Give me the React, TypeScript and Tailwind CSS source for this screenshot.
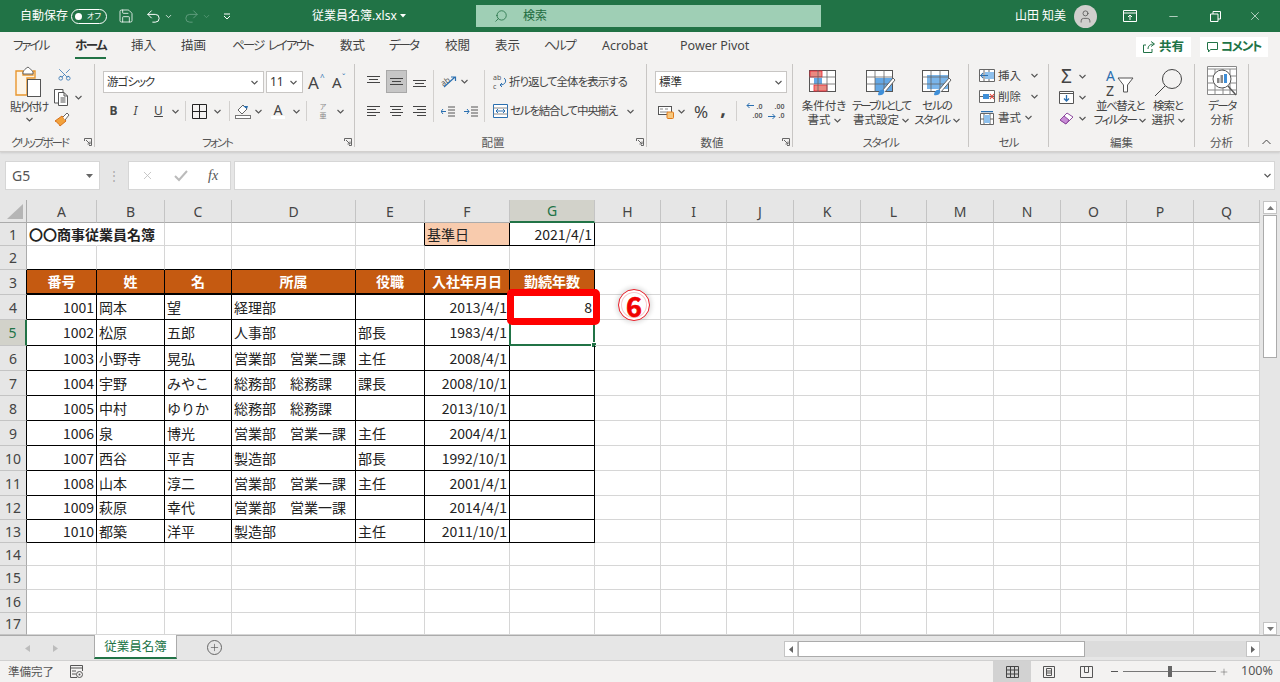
import { ChevronDown, Save, Undo2, Redo2, Search, User, X, Minus, Scissors, Plus } from "lucide-react";
import clsx from "clsx";
import type { ReactNode } from "react";

function Chev({ className }: { className?: string }) {
  return (
    <svg width="7" height="5" viewBox="0 0 7 5" className={clsx("shrink-0", className)}>
      <path d="M.5 1 3.5 4 6.5 1" fill="none" stroke="#555" strokeWidth="1.1" />
    </svg>
  );
}

function Launcher() {
  return (
    <svg width="8" height="8" viewBox="0 0 8 8" className="absolute right-[2px] bottom-[1px]">
      <path d="M.5 3V.5H7.5V7.5H5M2 2 6 6M6 3.5V6H3.5" fill="none" stroke="#666" strokeWidth="1" />
    </svg>
  );
}

function Lines({ ys, xs }: { ys: number[]; xs: [number, number][] }) {
  return (
    <svg width="15" height="15" viewBox="0 0 15 15">
      {ys.map((y, i) => (
        <rect key={y} x={xs[i][0]} y={y} width={xs[i][1]} height="1" fill="#444" />
      ))}
    </svg>
  );
}

const full: [number, number][] = [[1, 13], [3, 9], [1, 13]];

function Cell_({ w, children, active }: { w: string; children?: ReactNode; active?: boolean }) {
  return (
    <div className={clsx("flex items-center justify-center shrink-0 h-full", w, active && "bg-[#c6c6c6] border border-[#a8a8a8]")}>
      {children}
    </div>
  );
}

function VSep() {
  return <div className="w-px h-[20px] bg-[#d2d0ce] shrink-0" />;
}

function Group({ w, label, launcher, tr, children }: { w: string; label: string; launcher?: boolean; tr?: string; children: ReactNode }) {
  return (
    <div className={clsx("relative h-[83px] shrink-0 border-r border-[#c8c6c4] flex flex-col", w)}>
      <div className="h-[73px] shrink-0 flex">{children}</div>
      <div className={clsx("h-[12px] shrink-0 text-center text-[11.5px] leading-[12px] text-[#555] whitespace-nowrap", launcher && "pr-[15px]", tr)}>{label}</div>
      {launcher && <Launcher />}
    </div>
  );
}

function BigBtn({ w, icon, l1, l2, chev, tr1, tr2 }: { w: string; icon: ReactNode; l1: string; l2: string; chev?: boolean; tr1?: string; tr2?: string }) {
  return (
    <div className={clsx("flex flex-col items-center shrink-0", w)}>
      <div className="h-[33px] flex items-end justify-center">{icon}</div>
      <div className={clsx("mt-[2px] text-[11.5px] leading-[14px] text-[#444] text-center whitespace-nowrap", tr1)}>{l1}</div>
      <div className="text-[11.5px] leading-[14px] text-[#444] flex items-center justify-center gap-[3px] whitespace-nowrap">
        <span className={tr2}>{l2}</span>
        {chev && <Chev />}
      </div>
    </div>
  );
}

function TableIcon({ kind }: { kind: "cond" | "table" | "cell" }) {
  return (
    <svg width="30" height="27" viewBox="0 0 30 27">
      <rect x=".5" y=".5" width="26" height="21" fill="#fff" stroke="#555" />
      {kind === "cond" && (
        <>
          <rect x="1" y="1" width="12" height="6" fill="#e98a80" stroke="#e23" strokeWidth=".8" />
          <rect x="5" y="8" width="8" height="6" fill="#64a8e6" />
          <rect x="5" y="15" width="13" height="6" fill="#e98a80" stroke="#e23" strokeWidth=".8" />
        </>
      )}
      {kind === "table" && <rect x="9" y="8" width="17" height="13" fill="#64a8e6" />}
      {kind === "cell" && <rect x="5" y="5" width="21" height="14" fill="#7ab5ea" />}
      <path d="M9 0V22M18 0V22M0 7H27M0 14H27" stroke="#666" strokeWidth=".8" />
      {kind !== "cond" && (
        <>
          <path d="M16 21 27 8l2 2-10 12" fill="#fff" stroke="#666" />
          <path d="M12 25c0-4 3-6 6-5 1 3-1 6-6 5z" fill="#3f8fd8" />
        </>
      )}
    </svg>
  );
}

const tabs = [
  { t: "ファイル", w: "w-[62px]", tr: "tracking-[-2px]" },
  { t: "ホーム", w: "w-[56px]", on: true, tr: "tracking-[-1.5px]" },
  { t: "挿入", w: "w-[50px]" },
  { t: "描画", w: "w-[51px]" },
  { t: "ページ レイアウト", w: "w-[108px]", tr: "tracking-[-1.9px] [word-spacing:3px]" },
  { t: "数式", w: "w-[49px]" },
  { t: "データ", w: "w-[56px]", tr: "tracking-[-2px]" },
  { t: "校閲", w: "w-[50px]" },
  { t: "表示", w: "w-[49px]" },
  { t: "ヘルプ", w: "w-[58px]", tr: "tracking-[-1.5px]" },
  { t: "Acrobat", w: "w-[78px]" },
  { t: "Power Pivot", w: "w-[80px]" },
];

function TitleBar() {
  return (
    <div className="h-8 bg-[#217346] flex items-center text-white text-[12px] shrink-0">
      <span className="ml-[20px] w-[51px] whitespace-nowrap">自動保存</span>
      <div className="w-[36px] h-[15px] rounded-full border border-white flex items-center px-[3px] justify-between">
        <span className="w-[7px] h-[7px] rounded-full bg-white" />
        <span className="text-[8px] leading-none mr-[2px]">オフ</span>
      </div>
      <Save size={16} strokeWidth={1.2} className="ml-[11px]" />
      <Undo2 size={17} strokeWidth={1.4} className="ml-[11px]" />
      <ChevronDown size={9} className="ml-[2px]" />
      <Redo2 size={17} strokeWidth={1.4} className="ml-[10px] text-[#5f9c7c]" />
      <ChevronDown size={9} className="ml-[2px] text-[#5f9c7c]" />
      <svg width="8" height="7" viewBox="0 0 8 7" className="ml-[12px]">
        <path d="M1 1H7M1 3 4 6 7 3" fill="none" stroke="#fff" />
      </svg>
      <span className="ml-[81px] w-[85px] whitespace-nowrap text-[12px]">従業員名簿.xlsx</span>
      <svg width="6" height="4" viewBox="0 0 6 4" className="ml-[3px]">
        <path d="M0 0H6L3 3.5Z" fill="#fff" />
      </svg>
      <div className="ml-[70px] w-[345px] h-[22px] bg-[#9fcfb5] flex items-center text-[#1d6b40]">
        <Search size={14} strokeWidth={1.3} className="ml-[18px] -scale-x-100" />
        <span className="ml-[15px]">検索</span>
      </div>
      <span className="ml-[194px] whitespace-nowrap">山田 知美</span>
      <div className="ml-[8px] w-[23px] h-[23px] rounded-full bg-[#d0cfcd] flex items-center justify-center">
        <User size={15} strokeWidth={1.3} className="text-[#555]" />
      </div>
      <svg width="14" height="12" viewBox="0 0 14 12" className="ml-[26px]">
        <path d="M.5 .5H13.5V11.5H.5ZM.5 3H13.5M7 10V5M5 7 7 5 9 7" fill="none" stroke="#fff" />
      </svg>
      <Minus size={13} strokeWidth={1.2} className="ml-[30px]" />
      <svg width="11" height="11" viewBox="0 0 11 11" className="ml-[30px]">
        <path d="M.5 3H8V10.5H.5ZM3 3V.5H10.5V8H8" fill="none" stroke="#fff" />
      </svg>
      <X size={14} strokeWidth={1.1} className="ml-[27px]" />
    </div>
  );
}

function TabRow() {
  return (
    <div className="h-7 flex items-center pl-[13px] text-[12.5px] text-[#444] shrink-0">
      {tabs.map((t) => (
        <div key={t.t} className={clsx("shrink-0 whitespace-nowrap", t.w, t.tr)}>
          <span className={clsx("relative inline-block", t.on && "font-bold text-[#333]")}>
            {t.t}
            {t.on && <span className="absolute -bottom-[4px] left-0 right-0 h-[2px] bg-[#217346]" />}
          </span>
        </div>
      ))}
      <div className="ml-auto flex gap-[9px] mr-[12px] mt-[2px]">
        <div className="w-[55px] h-[20px] bg-white flex items-center justify-center gap-[4px] font-bold text-[#217346] text-[12.5px]">
          <svg width="12" height="12" viewBox="0 0 12 12">
            <path d="M8 .5 11.5 3 8 5.5M11 3C7 3 5 5 5 8M3 4H.5V11.5H9V8" fill="none" stroke="#217346" />
          </svg>
          共有
        </div>
        <div className="w-[68px] h-[20px] bg-white flex items-center justify-center gap-[3px] font-bold text-[#217346] text-[12.5px] tracking-[-1.2px]">
          <svg width="11" height="11" viewBox="0 0 11 11">
            <path d="M.5 .5H10.5V7.5H3.5L1.5 10V7.5H.5Z" fill="none" stroke="#217346" />
          </svg>
          コメント
        </div>
      </div>
    </div>
  );
}

function Clipboard() {
  return (
    <div className="flex">
      <div className="w-[48px] ml-[5px] flex flex-col items-center">
        <svg width="28" height="32" viewBox="0 0 28 32" className="mt-[2px]">
          <path d="M1 5H8V9H18V5H20V12H12V29H1Z" fill="#fdf4e6" stroke="#e8962e" strokeWidth="1.4" />
          <path d="M8 6C9 4 10 3 13 1 15 3 17 4 18 6V8H8Z" fill="#fff" stroke="#666" />
          <rect x="12.5" y="13.5" width="13" height="17" fill="#fff" stroke="#555" />
        </svg>
        <span className="mt-[2px] text-[11.5px] leading-[14px] text-[#444] whitespace-nowrap tracking-[-1.5px]">貼り付け</span>
        <Chev className="mt-[3px]" />
      </div>
      <div className="ml-[1px] flex flex-col items-start pt-[3px] gap-[7px]">
        <Scissors size={15} strokeWidth={1.2} className="text-[#2a6fb0] -rotate-90 ml-[3px]" />
        <div className="flex items-center gap-[5px]">
          <svg width="16" height="17" viewBox="0 0 16 17">
            <path d="M4 14H.5V.5H9V3M4.5 3.5H10L13.5 7V16.5H4.5ZM10 3.5V7H13.5M6.5 9H11.5M6.5 11H11.5M6.5 13H11.5" fill="#fff" stroke="#555" />
          </svg>
          <Chev />
        </div>
        <svg width="16" height="15" viewBox="0 0 16 15" className="-mt-[1px]">
          <path d="M1 9 8 4 12 9 6 14C5 12 3 10 1 9Z" fill="#f2a23c" stroke="#d8701a" />
          <path d="M9 5 13 1 15 3 11 8" fill="#fff" stroke="#666" />
        </svg>
      </div>
    </div>
  );
}

function FontGroup() {
  return (
    <div className="pl-[8px] pt-[7px] flex flex-col">
      <div className="h-[22px] flex items-center">
        <div className="w-[161px] h-[22px] bg-white border border-[#c8c6c4] flex items-center justify-between pl-[3px] pr-[5px] text-[11.5px] text-[#333]">
          <span className="tracking-[-1px]">游ゴシック</span>
          <Chev />
        </div>
        <div className="ml-[2px] w-[37px] h-[22px] bg-white border border-[#c8c6c4] flex items-center justify-between pl-[3px] pr-[5px] text-[12px] text-[#333]">
          11
          <Chev />
        </div>
        <div className="ml-[5px] w-[20px] text-[17px] leading-none text-[#444] relative">
          A<span className="absolute -top-[1px] left-[12px] text-[8px] text-[#2a6fb0]">^</span>
        </div>
        <div className="ml-[4px] w-[15px] text-[15px] leading-none text-[#444] relative">
          A<span className="absolute -top-[1px] left-[10px] text-[8px] text-[#2a6fb0]">ˇ</span>
        </div>
      </div>
      <div className="h-[22px] mt-[7px] flex items-center text-[#444]">
        <Cell_ w="w-[21px]"><b className="text-[12px]">B</b></Cell_>
        <Cell_ w="w-[23px]"><i className="text-[12px]">I</i></Cell_>
        <Cell_ w="w-[23px]"><span className="text-[12px] underline">U</span></Cell_>
        <Cell_ w="w-[10px]"><Chev /></Cell_>
        <Cell_ w="w-[10px]"><VSep /></Cell_>
        <Cell_ w="w-[18px]">
          <svg width="15" height="15" viewBox="0 0 15 15">
            <path d="M.5 .5H14.5V14.5H.5ZM7.5 0V15M0 7.5H15" fill="none" stroke="#222" />
          </svg>
        </Cell_>
        <Cell_ w="w-[18px]"><Chev /></Cell_>
        <Cell_ w="w-[6px]"><VSep /></Cell_>
        <Cell_ w="w-[22px]">
          <svg width="16" height="15" viewBox="0 0 16 15">
            <path d="M3 6 8 1 12 5 7 10Z" fill="#fff" stroke="#666" />
            <path d="M8 2 13 2 12 5Z" fill="#2a6fb0" />
            <rect x=".5" y="11.5" width="15" height="3" fill="#fff" stroke="#777" />
          </svg>
        </Cell_>
        <Cell_ w="w-[9px]"><Chev /></Cell_>
        <Cell_ w="w-[30px]">
          <div className="flex flex-col items-center text-[14px] leading-[13px]">
            A<span className="w-[14px] h-[3px] bg-white" />
          </div>
        </Cell_>
        <Cell_ w="w-[7px]"><Chev /></Cell_>
        <Cell_ w="w-[12px]"><VSep /></Cell_>
        <Cell_ w="w-[22px]">
          <span className="text-[7px] leading-[9px] text-center text-[#888]">ア<br />亜</span>
        </Cell_>
        <Cell_ w="w-[12px]"><Chev /></Cell_>
      </div>
    </div>
  );
}

function AlignGroup() {
  return (
    <div className="pl-[6px] pt-[6px] flex">
      <div className="w-[72px] flex flex-col gap-[7px]">
        <div className="flex h-[23px] items-center">
          <Cell_ w="w-[25px]"><Lines ys={[2, 5, 8]} xs={full} /></Cell_>
          <Cell_ w="w-[21px]" active><Lines ys={[4, 7, 10]} xs={full} /></Cell_>
          <Cell_ w="w-[24px]"><Lines ys={[6, 9, 12]} xs={full} /></Cell_>
        </div>
        <div className="flex h-[22px] items-center">
          <Cell_ w="w-[25px]"><Lines ys={[2, 5, 8, 11]} xs={[[1, 13], [1, 9], [1, 13], [1, 9]]} /></Cell_>
          <Cell_ w="w-[21px]"><Lines ys={[2, 5, 8, 11]} xs={[[1, 13], [3, 9], [1, 13], [3, 9]]} /></Cell_>
          <Cell_ w="w-[24px]"><Lines ys={[2, 5, 8, 11]} xs={[[1, 13], [5, 9], [1, 13], [5, 9]]} /></Cell_>
        </div>
      </div>
      <div className="w-px h-[52px] bg-[#d2d0ce]" />
      <div className="w-[50px] flex flex-col gap-[7px]">
        <div className="flex h-[23px] items-center pl-[6px] gap-[4px]">
          <svg width="17" height="15" viewBox="0 0 17 15" className="overflow-visible">
            <text x="1" y="10" fontSize="8" fill="#555" transform="rotate(-35 6 8)">ab</text>
            <path d="M4 13 15 3M11 3H15.500V7" fill="none" stroke="#2a6fb0" strokeWidth="1.2" />
          </svg>
          <Chev />
        </div>
        <div className="flex h-[22px] items-center pl-[7px] gap-[8px]">
          <svg width="15" height="11" viewBox="0 0 15 11">
            <path d="M7 1H14M7 4H14M7 7H14M7 10H14" stroke="#555" />
            <path d="M5 5.500H0M2 3 0 5.500 2 8" fill="none" stroke="#2a6fb0" />
          </svg>
          <svg width="15" height="11" viewBox="0 0 15 11">
            <path d="M7 1H14M7 4H14M7 7H14M7 10H14" stroke="#555" />
            <path d="M0 5.500H5M3 3 5 5.500 3 8" fill="none" stroke="#2a6fb0" />
          </svg>
        </div>
      </div>
      <div className="w-px h-[52px] bg-[#d2d0ce]" />
      <div className="pl-[8px] flex flex-col gap-[7px] text-[11.5px] text-[#444] whitespace-nowrap">
        <div className="flex h-[23px] items-center gap-[2px]">
          <svg width="14" height="16" viewBox="0 0 14 16" className="overflow-visible">
            <text x="0" y="6" fontSize="7" fill="#555">ab</text>
            <text x="0" y="15" fontSize="7" fill="#555">c</text>
            <path d="M11 4C14 6 13 11 7 11M9 9 7 11 9 13" fill="none" stroke="#2a6fb0" />
          </svg>
          <span className="tracking-[-1px]">折り返して全体を表示する</span>
        </div>
        <div className="flex h-[22px] items-center gap-[2px]">
          <svg width="15" height="14" viewBox="0 0 15 14">
            <path d="M.5 .5H14.500V13.500H.5Z" fill="#fff" stroke="#2a6fb0" />
            <path d="M.5 4H14.500M.5 10H14.500" stroke="#888" />
            <path d="M3 7H12M5 5 3 7 5 9M10 5 12 7 10 9" fill="none" stroke="#2a6fb0" />
          </svg>
          <span className="tracking-[-1.2px]">セルを結合して中央揃え</span>
          <Chev className="ml-[8px]" />
        </div>
      </div>
    </div>
  );
}

function NumberGroup() {
  return (
    <div className="pl-[8px] pt-[7px] flex flex-col">
      <div className="w-[132px] h-[22px] bg-white border border-[#c8c6c4] flex items-center justify-between pl-[3px] pr-[4px] text-[11.5px] text-[#333]">
        標準
        <Chev />
      </div>
      <div className="h-[22px] mt-[7px] flex items-center text-[#444]">
        <Cell_ w="w-[21px]">
          <svg width="16" height="15" viewBox="0 0 16 15">
            <rect x=".5" y="2.500" width="13" height="8" fill="#fff" stroke="#555" />
            <path d="M2 5H5M7 5H10M2 8H10" stroke="#888" />
            <rect x="9" y="8" width="6.500" height="6.500" rx="1" fill="#f7c77c" stroke="#e07a1a" />
          </svg>
        </Cell_>
        <Cell_ w="w-[11px]"><Chev /></Cell_>
        <Cell_ w="w-[28px]"><span className="text-[17px] leading-none">%</span></Cell_>
        <Cell_ w="w-[16px]"><span className="text-[20px] leading-none font-bold -mt-[6px]">,</span></Cell_>
        <Cell_ w="w-[11px]"><VSep /></Cell_>
        <Cell_ w="w-[24px]">
          <span className="relative text-[7px] leading-[9px] font-semibold text-right w-[17px] text-[#555]">
            .0<br />.00
            <svg width="8" height="7" viewBox="0 0 8 7" className="absolute left-0 top-0">
              <path d="M8 3.500H1M3.500 1 1 3.500 3.500 6" fill="none" stroke="#2a6fb0" />
            </svg>
          </span>
        </Cell_>
        <Cell_ w="w-[20px]">
          <span className="relative text-[7px] leading-[9px] font-semibold text-right w-[17px] text-[#555]">
            .00<br />.0
            <svg width="8" height="7" viewBox="0 0 8 7" className="absolute left-0 bottom-0">
              <path d="M0 3.500H7M4.500 1 7 3.500 4.500 6" fill="none" stroke="#2a6fb0" />
            </svg>
          </span>
        </Cell_>
      </div>
    </div>
  );
}

function SmallRow({ icon, text, chevGap }: { icon: ReactNode; text: string; chevGap: string }) {
  return (
    <div className="h-[21px] flex items-center text-[11.5px] text-[#444] whitespace-nowrap">
      <div className="w-[16px] flex justify-center">{icon}</div>
      <span className="ml-[3px]">{text}</span>
      <Chev className={chevGap} />
    </div>
  );
}

function CellsGroup() {
  return (
    <div className="pl-[10px] pt-[1px] flex flex-col">
      <SmallRow
        text="挿入"
        chevGap="ml-[10px]"
        icon={
          <svg width="16" height="13" viewBox="0 0 16 13">
            <path d="M.5 .5H15.500V12.500H.5ZM5 0V13M10 0V13M0 6.500H16" fill="#fff" stroke="#666" />
            <rect x="6" y="3" width="9" height="7" fill="#8ec0ec" />
            <path d="M9 6.500H2M4 4 2 6.500 4 9" fill="none" stroke="#2a6fb0" strokeWidth="1.200" />
          </svg>
        }
      />
      <SmallRow
        text="削除"
        chevGap="ml-[10px]"
        icon={
          <svg width="16" height="13" viewBox="0 0 16 13">
            <path d="M.5 .5H15.500V12.500H.5ZM.5 6.500H15.500" fill="#fff" stroke="#666" />
            <rect x="4" y="4" width="6" height="5" fill="#3f8fd8" />
            <path d="M11 4 15 9M15 4 11 9" stroke="#e0443a" strokeWidth="1.200" />
          </svg>
        }
      />
      <SmallRow
        text="書式"
        chevGap="ml-[4px]"
        icon={
          <svg width="16" height="14" viewBox="0 0 16 14">
            <path d="M1.500 2.500H14.500V13.500H1.500ZM5 3V13M11 3V13M2 8H14" fill="#fff" stroke="#666" />
            <rect x="5" y="4" width="6" height="8" fill="#8ec0ec" />
            <path d="M2 .5H14" stroke="#2a6fb0" strokeWidth="1.500" />
          </svg>
        }
      />
    </div>
  );
}

function EditGroup() {
  return (
    <div className="flex">
      <div className="w-[42px] pl-[10px] pt-[2px] flex flex-col">
        <div className="h-[21px] flex items-center gap-[5px]">
          <span className="w-[15px] text-center text-[19px] leading-none text-[#444]">Σ</span>
          <Chev />
        </div>
        <div className="h-[21px] flex items-center gap-[5px]">
          <svg width="15" height="13" viewBox="0 0 15 13">
            <path d="M.5 .5H14.500V12.500H.5ZM0 2.500H15" fill="#fff" stroke="#555" />
            <path d="M7.500 4V10M5 7.500 7.500 10 10 7.500" fill="none" stroke="#2a6fb0" strokeWidth="1.300" />
          </svg>
          <Chev />
        </div>
        <div className="h-[21px] flex items-center gap-[5px]">
          <svg width="15" height="13" viewBox="0 0 15 13">
            <path d="M1 8 8 1 14 5 7 12Z" fill="#fff" stroke="#8d4a9e" />
            <path d="M1 8 5 4 10 8 7 12Z" fill="#c88cd6" stroke="#8d4a9e" />
          </svg>
          <Chev />
        </div>
      </div>
      <BigBtn
        w="w-[58px]"
        icon={
          <svg width="28" height="28" viewBox="0 0 28 28" className="overflow-visible">
            <text x="0" y="12" fontSize="14" fill="#2a6fb0">A</text>
            <text x="0" y="27" fontSize="14" fill="#444">Z</text>
            <path d="M12 9H27L21.500 16V23H17.500V16Z" fill="#fff" stroke="#555" />
          </svg>
        }
        l1="並べ替えと"
        l2="フィルター"
        tr1="tracking-[-1.5px]"
        tr2="tracking-[-1.5px]"
        chev
      />
      <BigBtn
        w="w-[38px]"
        icon={
          <svg width="29" height="29" viewBox="0 0 29 29">
            <circle cx="18" cy="11" r="9.500" fill="none" stroke="#444" />
            <path d="M11 18 1 28" stroke="#444" />
          </svg>
        }
        l1="検索と"
        l2="選択"
        tr1="tracking-[-1px]"
        chev
      />
    </div>
  );
}

const colWidths =
  "grid-cols-[27px_70px_68px_67px_124px_69px_85px_85px_66px_66px_67px_67px_66px_67px_67px_66px_67px_66px]";
const rowHeights =
  "grid-rows-[23px_23px_24px_25px_25px_26px_25px_25px_25px_25px_25px_25px_24px_23px_23px_24px_23px_22px]";

const letters = ["A", "B", "C", "D", "E", "F", "G", "H", "I", "J", "K", "L", "M", "N", "O", "P", "Q"];

const staff = [
  ["1001", "岡本", "望", "経理部", "", "2013/4/1", "8"],
  ["1002", "松原", "五郎", "人事部", "部長", "1983/4/1", ""],
  ["1003", "小野寺", "晃弘", "営業部　営業二課", "主任", "2008/4/1", ""],
  ["1004", "宇野", "みやこ", "総務部　総務課", "課長", "2008/10/1", ""],
  ["1005", "中村", "ゆりか", "総務部　総務課", "", "2013/10/1", ""],
  ["1006", "泉", "博光", "営業部　営業一課", "主任", "2004/4/1", ""],
  ["1007", "西谷", "平吉", "製造部", "部長", "1992/10/1", ""],
  ["1008", "山本", "淳二", "営業部　営業一課", "主任", "2001/4/1", ""],
  ["1009", "萩原", "幸代", "営業部　営業一課", "", "2014/4/1", ""],
  ["1010", "都築", "洋平", "製造部", "主任", "2011/10/1", ""],
];

const heads = ["番号", "姓", "名", "所属", "役職", "入社年月日", "勤続年数"];

function SheetCell({ r, c }: { r: number; c: number }) {
  const inTable = r >= 3 && r <= 13 && c <= 6;
  const inBase = r === 1 && (c === 5 || c === 6);
  const boxed = inTable || inBase;
  const aboveTable = r === 2 && c <= 6;
  const leftOfBase = r === 1 && c === 4;
  const isHead = r === 3 && c <= 6;

  let text = "";
  if (isHead) text = heads[c];
  else if (r >= 4 && r <= 13 && c <= 6) text = staff[r - 4][c];
  else if (r === 1 && c === 5) text = "基準日";
  else if (r === 1 && c === 6) text = "2021/4/1";

  const numeric = r >= 4 && r <= 13 && (c === 0 || c === 5 || c === 6);

  return (
    <div
      className={clsx(
        "relative flex items-center whitespace-nowrap text-[14px] text-[#222] min-w-0 border-b border-r",
        boxed ? "border-black" : "border-[#d6d6d6]",
        aboveTable && "border-b-black",
        leftOfBase && "border-r-black",
        r === 1 && c === 0 && "border-r-transparent",
        isHead && "bg-[#c55a11] text-white font-bold justify-center border-b-2",
        r === 1 && c === 5 && "bg-[#f8cbad]",
        numeric || (r === 1 && c === 6) ? "justify-end pr-[2px] text-[13.500px]" : !isHead && "pl-[2px]"
      )}
    >
      {r === 1 && c === 0 ? <b className="text-[14px]">〇〇商事従業員名簿</b> : text}
      {r === 4 && c === 6 && (
        <div className="absolute -left-[3px] -top-[6px] w-[93px] h-[36px] border-[7px] border-[#f00] rounded-[5px] z-10" />
      )}
      {r === 5 && c === 6 && (
        <div className="absolute -left-px -top-px right-[-1px] bottom-[-1px] border-2 border-[#217346]">
          <span className="absolute -right-[4px] -bottom-[4px] w-[6px] h-[6px] bg-[#217346] border border-white" />
        </div>
      )}
      {r === 4 && c === 7 && (
        <div className="absolute left-[23px] -top-[6px] w-[32px] h-[32px] rounded-full border-[1.5px] border-[#e8202a] bg-white flex items-center justify-center text-[#f00000] font-bold text-[27px] leading-none [-webkit-text-stroke:0.7px_#f00000] shadow-[inset_0_0_0_2px_#fff,inset_0_0_0_3px_#f6caca,0_0_4px_2px_rgba(0,0,0,0.12)] z-10">
          6
        </div>
      )}
    </div>
  );
}

function Sheet() {
  const rows = Array.from({ length: 17 }, (_, i) => i + 1);
  return (
    <div className={clsx("grid w-[1260px] font-['Noto_Sans_CJK_JP',sans-serif]", colWidths, rowHeights)}>
      <div className="bg-[#e6e6e6] border-r border-b border-[#ababab] flex items-end justify-end pr-[3px] pb-[3px]">
        <svg width="16" height="15" viewBox="0 0 16 15">
          <path d="M16 0V15H0Z" fill="#b5b5b5" />
        </svg>
      </div>
      {letters.map((l) => (
        <div
          key={l}
          className={clsx(
            "flex items-center justify-center text-[14px] border-r border-[#c4c4c4] font-['Noto_Sans',sans-serif]",
            l === "G" ? "bg-[#d2d2ca] text-[#217346] border-b-2 border-b-[#217346]" : "bg-[#e6e6e6] text-[#444] border-b border-b-[#ababab]"
          )}
        >
          {l}
        </div>
      ))}
      {rows.map((r) => (
        <div key={r} className="contents">
          <div
            className={clsx(
              "flex items-center justify-center text-[14px] border-b border-[#c4c4c4] font-['Noto_Sans',sans-serif]",
              r === 5 ? "bg-[#d2d2ca] text-[#217346] border-r-2 border-r-[#217346]" : "bg-[#e6e6e6] text-[#444] border-r border-r-[#ababab]",
              r >= 3 && r <= 13 && r !== 5 && "border-r-black"
            )}
          >
            {r}
          </div>
          {letters.map((_, c) => (
            <SheetCell key={c} r={r} c={c} />
          ))}
        </div>
      ))}
    </div>
  );
}

function VScroll() {
  return (
    <div className="w-[20px] h-[435px] bg-[#e6e6e6] flex flex-col items-center pt-[1px]">
      <div className="w-[14px] h-[13px] bg-white border border-[#c4c4c4] flex items-center justify-center">
        <svg width="7" height="4" viewBox="0 0 7 4"><path d="M0 4H7L3.500 0Z" fill="#777" /></svg>
      </div>
      <div className="w-[14px] h-[143px] mt-px bg-white border border-[#ababab]" />
      <div className="flex-1" />
      <div className="w-[14px] h-[13px] bg-white border border-[#c4c4c4] flex items-center justify-center">
        <svg width="7" height="4" viewBox="0 0 7 4"><path d="M0 0H7L3.500 4Z" fill="#777" /></svg>
      </div>
    </div>
  );
}

function SheetTabs() {
  return (
    <div className="h-[25px] bg-[#e6e6e6] border-t border-[#ababab] flex items-start shrink-0">
      <div className="w-[94px] h-full flex items-center pl-[25px] gap-[23px]">
        <svg width="5" height="7" viewBox="0 0 5 7"><path d="M5 0V7L0 3.500Z" fill="#bcbcbc" /></svg>
        <svg width="5" height="7" viewBox="0 0 5 7"><path d="M0 0V7L5 3.500Z" fill="#bcbcbc" /></svg>
      </div>
      <div className="w-[83px] h-[24px] -mt-px bg-white border-b-2 border-[#217346] border-x border-x-[#ababab] flex items-center justify-center text-[12.500px] text-[#217346] font-['Noto_Sans_CJK_JP',sans-serif]">
        従業員名簿
      </div>
      <div className="ml-[30px] mt-[4px] w-[15px] h-[15px] rounded-full border border-[#666] flex items-center justify-center">
        <Plus size={11} strokeWidth={1.4} className="text-[#555]" />
      </div>
      <div className="ml-auto mr-[20px] mt-[5px] w-[476px] h-[16px] flex bg-[#dcdcdc]">
        <div className="w-[14px] bg-white border border-[#c4c4c4] flex items-center justify-center">
          <svg width="4" height="7" viewBox="0 0 4 7"><path d="M4 0V7L0 3.500Z" fill="#666" /></svg>
        </div>
        <div className="w-[287px] bg-white border border-[#ababab]" />
        <div className="flex-1" />
        <div className="w-[14px] bg-white border border-[#c4c4c4] flex items-center justify-center">
          <svg width="4" height="7" viewBox="0 0 4 7"><path d="M0 0V7L4 3.500Z" fill="#666" /></svg>
        </div>
      </div>
    </div>
  );
}

function StatusBar() {
  return (
    <div className="h-[22px] bg-[#f3f2f1] border-t border-[#d0d0d0] flex items-center text-[11.500px] text-[#555] shrink-0">
      <span className="ml-[8px] w-[45px] whitespace-nowrap">準備完了</span>
      <svg width="13" height="13" viewBox="0 0 13 13" className="ml-[17px]">
        <path d="M.5 .5H12.500M.5 3H12.500M.5 .5V12.500H7M12.500 .5V6M2 6H6M2 9H6" fill="none" stroke="#555" />
        <circle cx="9.500" cy="9.500" r="3" fill="none" stroke="#555" />
        <circle cx="9.500" cy="9.500" r="1" fill="#555" />
      </svg>
      <div className="ml-[910px] w-[38px] h-full bg-[#d2d2d2] flex items-center justify-center">
        <svg width="13" height="12" viewBox="0 0 13 12">
          <path d="M.5 .5H12.500V11.500H.5ZM4.500 0V12M8.500 0V12M0 4H13M0 8H13" fill="none" stroke="#444" />
        </svg>
      </div>
      <svg width="12" height="12" viewBox="0 0 12 12" className="ml-[12px]">
        <path d="M.5 .5H11.500V11.500H.5ZM3.500 2.500H8.500V9.500H3.500ZM3.500 5H8.500M3.500 7H8.500" fill="none" stroke="#555" />
      </svg>
      <svg width="13" height="12" viewBox="0 0 13 12" className="ml-[25px]">
        <path d="M.5 .5H12.500V11.500H.5ZM4.500 0V6.500H8.500V0" fill="none" stroke="#555" />
      </svg>
      <span className="ml-[18px] w-[7px] h-px bg-[#555]" />
      <div className="relative ml-[5px] w-[93px] h-px bg-[#777]">
        <span className="absolute left-[45px] -top-[5px] w-[4px] h-[11px] bg-[#666]" />
      </div>
      <Plus size={10} strokeWidth={1.2} className="ml-[3px] text-[#555]" />
      <span className="ml-[12px] text-[12.500px] font-['Noto_Sans',sans-serif] whitespace-nowrap">100%</span>
    </div>
  );
}

export default function App() {
  return (
    <div className="w-[1280px] h-[682px] overflow-hidden flex flex-col bg-[#e6e6e6] font-['Noto_Sans','Noto_Sans_CJK_JP',sans-serif]">
      <div className="contents [font-feature-settings:'palt']">
        <TitleBar />
        <div className="bg-[#f3f2f1] h-[120px] shrink-0 border-b border-[#d2d0ce] shadow-[0_1px_2px_rgba(0,0,0,0.12)] relative">
          <TabRow />
          <div className="flex pt-[4px]">
            <Group w="w-[95px]" label="クリップボード" tr="tracking-[-2px]" launcher><Clipboard /></Group>
            <Group w="w-[260px]" label="フォント" tr="tracking-[-2px]" launcher><FontGroup /></Group>
            <Group w="w-[292px]" label="配置" launcher><AlignGroup /></Group>
            <Group w="w-[146px]" label="数値" launcher><NumberGroup /></Group>
            <Group w="w-[176px]" label="スタイル" tr="tracking-[-1.4px]">
              <div className="flex pl-[8px]">
                <BigBtn w="w-[46px]" icon={<TableIcon kind="cond" />} l1="条件付き" l2="書式" chev />
                <BigBtn w="w-[68px]" icon={<TableIcon kind="table" />} l1="テーブルとして" l2="書式設定" tr1="tracking-[-2px]" chev />
                <BigBtn w="w-[44px]" icon={<TableIcon kind="cell" />} l1="セルの" l2="スタイル" tr1="tracking-[-1px]" tr2="tracking-[-1.5px]" chev />
              </div>
            </Group>
            <Group w="w-[80px]" label="セル" tr="tracking-[-1px]"><CellsGroup /></Group>
            <Group w="w-[146px]" label="編集"><EditGroup /></Group>
            <Group w="w-[54px]" label="分析">
              <BigBtn
                w="w-[54px]"
                icon={
                  <svg width="30" height="31" viewBox="0 0 30 31">
                    <path d="M.5 .5H29.500V28.500H.5ZM0 3H30M0 10H30M0 17H30M0 24H30M8 3V28M16 3V28M23 3V28" fill="#fff" stroke="#888" />
                    <circle cx="15" cy="13" r="9" fill="#fff" stroke="#555" />
                    <path d="M21 20 29 29" stroke="#555" strokeWidth="1.400" />
                    <rect x="10" y="12" width="2.500" height="5" fill="#888" />
                    <rect x="13.500" y="9" width="2.500" height="8" fill="#888" />
                    <rect x="17" y="8" width="3" height="9" fill="#3f8fd8" />
                  </svg>
                }
                l1="データ"
                l2="分析"
                tr1="tracking-[-1.5px]"
              />
            </Group>
            <div className="flex-1 h-[83px] flex items-end justify-end pr-[9px] pb-[2px]">
              <svg width="9" height="6" viewBox="0 0 9 6"><path d="M.5 5 4.500 1 8.500 5" fill="none" stroke="#444" /></svg>
            </div>
          </div>
        </div>
      </div>
      <div className="h-[48px] shrink-0 flex items-center pl-[5px] pr-[5px] pb-[1px]">
        <div className="w-[95px] h-[29px] bg-white border border-[#d6d6d6] flex items-center justify-between px-[6px] text-[14px] text-[#555]">
          G5
          <svg width="7" height="4" viewBox="0 0 7 4"><path d="M0 0H7L3.500 4Z" fill="#666" /></svg>
        </div>
        <div className="w-[28px] text-center text-[#aaa] text-[12px] leading-[5px]">⋮</div>
        <div className="w-[103px] h-[29px] bg-white border border-[#d6d6d6] flex items-center pl-[12px] text-[#bbb]">
          <X size={13} strokeWidth={1.5} />
          <svg width="14" height="12" viewBox="0 0 14 12" className="ml-[20px]"><path d="M1 6 5 10 13 1" fill="none" stroke="#bbb" strokeWidth="2" /></svg>
          <i className="ml-[20px] text-[14px] text-[#555] font-['Liberation_Serif',serif]">fx</i>
        </div>
        <div className="ml-[3px] flex-1 h-[29px] bg-white border border-[#d6d6d6] flex items-center justify-end pr-[3px]">
          <Chev />
        </div>
      </div>
      <div className="flex h-[435px] shrink-0 bg-white">
        <Sheet />
        <VScroll />
      </div>
      <SheetTabs />
      <div className="contents [font-feature-settings:'palt']">
        <StatusBar />
      </div>
    </div>
  );
}
